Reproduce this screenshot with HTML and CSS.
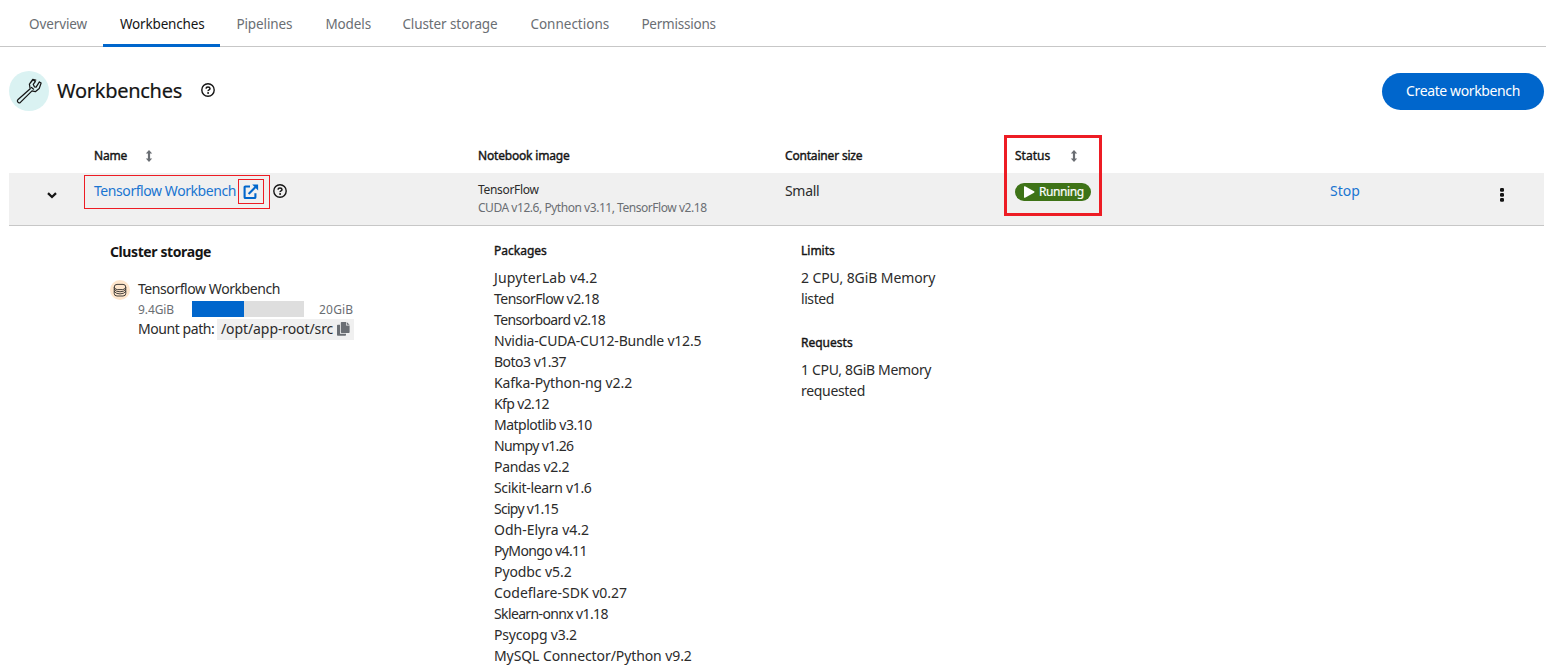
FILE: index.html
```
<!DOCTYPE html>
<html lang="en">
<head>
<meta charset="utf-8">
<title>Workbenches</title>
<link rel="stylesheet" href="styles.css">
</head>
<body>
<nav class="tabs">
  <a class="tab tab-overview">Overview</a>
  <a class="tab tab-workbenches active">Workbenches</a>
  <a class="tab tab-pipelines">Pipelines</a>
  <a class="tab tab-models">Models</a>
  <a class="tab tab-storage">Cluster storage</a>
  <a class="tab tab-connections">Connections</a>
  <a class="tab tab-permissions">Permissions</a>
</nav>
<header class="page-head">
  <span class="head-icon">
    <svg width="28" height="28" viewBox="0 0 28 28" fill="none" stroke="#151515" stroke-width="1.25" stroke-linejoin="round" stroke-linecap="round"><path d="M15.2 11.8 2.8 22.8Q1.8 24 2.9 25.2T5.4 25.4L17 13.9M15.2 11.8 14.4 7.2 18.1 2.7 20.3 4.5 18.2 7.3 19.5 10 21.1 10.2 24.4 4.9 26.1 6 24.2 11.6 20.3 14.7 17 13.9M15.1 6.2 17.8 2.4 20.8 3M16.5 10.5 18.6 12.2"/></svg>
  </span>
  <h1>Workbenches</h1>
  <svg class="help" width="14" height="14" viewBox="0 0 14 14"><circle cx="7" cy="7" r="6.2" fill="none" stroke="#151515" stroke-width="1.4"/><path d="M5 5.6Q5.1 3.9 7 3.9T9 5.5Q9 6.4 8 6.9T7.1 8.2" fill="none" stroke="#151515" stroke-width="1.5"/><circle cx="7.1" cy="10" r=".95" fill="#151515"/></svg>
  <button class="create">Create workbench</button>
</header>
<main class="table">
  <div class="row head">
    <div></div>
    <div class="cell sortable"><span>Name</span><svg width="8" height="12" viewBox="0 0 8 12"><path d="M4 0 7.2 3.4H5.1V8.6H7.2L4 12 .8 8.6H2.9V3.4H.8Z" fill="#6a6e73"/></svg></div>
    <div class="cell">Notebook image</div>
    <div class="cell">Container size</div>
    <div class="cell sortable status-head"><span>Status</span><svg width="8" height="12" viewBox="0 0 8 12"><path d="M4 0 7.2 3.4H5.1V8.6H7.2L4 12 .8 8.6H2.9V3.4H.8Z" fill="#6a6e73"/></svg><i class="status-frame"></i></div>
  </div>
  <div class="row item">
    <div class="toggle"><svg width="10" height="7" viewBox="0 0 10 7"><path d="M1 1.2 5 5 9 1.2" fill="none" stroke="#151515" stroke-width="2.3"/></svg></div>
    <div class="name-cell">
      <div class="link-frame"><span class="track-4">Tensorflow Workbench</span><b class="icon-frame"><svg width="16" height="16" viewBox="0 0 16 16"><path d="M7 2.5H2.4Q1.6 2.5 1.6 3.3V13.2Q1.6 14 2.4 14H11.6Q12.4 14 12.4 13.2V9.2M5.6 10 12.5 3.1" fill="none" stroke="#06c" stroke-width="2.1"/><path d="M9.2.5H15.1V6.4Z" fill="#06c"/></svg></b></div>
      <svg class="help" width="14" height="14" viewBox="0 0 14 14"><circle cx="7" cy="7" r="6.2" fill="none" stroke="#151515" stroke-width="1.4"/><path d="M5 5.6Q5.1 3.9 7 3.9T9 5.5Q9 6.4 8 6.9T7.1 8.2" fill="none" stroke="#151515" stroke-width="1.5"/><circle cx="7.1" cy="10" r=".95" fill="#151515"/></svg>
    </div>
    <div class="cell image"><p class="track-3">TensorFlow</p><p class="image-meta">CUDA v12.6, Python v3.11, TensorFlow v2.18</p></div>
    <div class="cell size track-3">Small</div>
    <div class="cell"><div class="running"><svg width="12" height="12" viewBox="0 0 12 12"><path d="M1 .8Q1-.2 2 .3L11 5.3Q12 6 11 6.7L2 11.7Q1 12.2 1 11.2Z" fill="#fff"/></svg><span>Running</span></div></div>
    <div class="cell stop">Stop</div>
    <div class="kebab"><svg width="4" height="14" viewBox="0 0 4 14" fill="#151515"><rect x="0" y="0" width="4" height="3.8" rx="1.2"/><rect x="0" y="5" width="4" height="3.8" rx="1.2"/><rect x="0" y="10" width="4" height="3.8" rx="1.2"/></svg></div>
  </div>
  <div class="row details">
    <div></div>
    <section class="storage">
      <h2>Cluster storage</h2>
      <div class="volume">
        <span class="volume-icon"><svg width="14" height="14" viewBox="0 0 14 14" fill="none" stroke="#151515" stroke-width=".8"><path d="M1.2 4.2Q1.2 1.4 4 1.4H10Q12.8 1.4 12.8 4.2V10.4Q12.8 13 10 13H4Q1.2 13 1.2 10.4ZM1.2 4.2Q2 6.6 4.4 6.6H9.6Q12 6.6 12.8 4.2M1.2 6.4Q3 8.8 7 8.8T12.8 6.4M1.2 8.4Q3 10.9 7 10.9T12.8 8.4"/></svg></span>
        <div class="volume-info">
          <div class="volume-name track-4">Tensorflow Workbench</div>
          <div class="usage"><span class="used">9.4GiB</span><i class="bar"><i class="bar-fill"></i></i><span class="total">20GiB</span></div>
          <div class="mount"><span class="track-4">Mount path:</span><code><span class="track-1">/opt/app-root/src</span><svg width="13" height="14" viewBox="0 0 13 14" fill="#6a6e73"><path d="M4.6 0H9V3.4H12.6V10.2Q12.6 11 11.8 11H4.6Q3.8 11 3.8 10.2V.8Q3.8 0 4.6 0ZM9.7 0 12.6 2.7H9.7ZM.8 2.7H3V11.8H9V13Q9 13.8 8.2 13.8H.8Q0 13.8 0 13V3.5Q0 2.7.8 2.7Z"/></svg></code></div>
        </div>
      </div>
    </section>
    <section class="packages">
      <h3>Packages</h3>
      <ul>
        <li class="track-wide">JupyterLab v4.2</li>
        <li class="track-5">TensorFlow v2.18</li>
        <li class="track-6">Tensorboard v2.18</li>
        <li class="track-2">Nvidia-CUDA-CU12-Bundle v12.5</li>
        <li class="track-5">Boto3 v1.37</li>
        <li class="track-1">Kafka-Python-ng v2.2</li>
        <li class="track-6">Kfp v2.12</li>
        <li class="track-5">Matplotlib v3.10</li>
        <li class="track-6">Numpy v1.26</li>
        <li class="track-3">Pandas v2.2</li>
        <li class="track-3">Scikit-learn v1.6</li>
        <li class="track-7">Scipy v1.15</li>
        <li>Odh-Elyra v4.2</li>
        <li class="track-6">PyMongo v4.11</li>
        <li class="track-1">Pyodbc v5.2</li>
        <li>Codeflare-SDK v0.27</li>
        <li class="track-6">Sklearn-onnx v1.18</li>
        <li class="track-2">Psycopg v3.2</li>
        <li class="track-1">MySQL Connector/Python v9.2</li>
      </ul>
    </section>
    <section class="resources">
      <h3>Limits</h3>
      <p class="track-1">2 CPU, 8GiB Memory<br><span class="track-4">listed</span></p>
      <h3 class="requests">Requests</h3>
      <p class="track-3">1 CPU, 8GiB Memory<br>requested</p>
    </section>
  </div>
</main>
</body>
</html>
```
FILE: styles.css
```
* { box-sizing: border-box; margin: 0; padding: 0; }
body {
  height: 667px;
  overflow: hidden;
  background: #fff;
  color: #2b2b2b;
  font: 14px/21px "Noto Sans", "Open Sans", sans-serif;
}
svg { display: block; flex: none; }
.track-wide { letter-spacing: .16px; }
.track-1 { letter-spacing: -.09px; }
.track-2 { letter-spacing: -.2px; }
.track-3 { letter-spacing: -.32px; }
.track-4 { letter-spacing: -.43px; }
.track-5 { letter-spacing: -.5px; }
.track-6 { letter-spacing: -.63px; }
.track-7 { letter-spacing: -.72px; }
.tabs { display: flex; height: 47px; padding-left: 12px; border-bottom: 1px solid #c7c7c7; }
.tab { height: 47px; padding: 14px 0 0 16.4px; color: #6a6e73; font-size: 13.5px; letter-spacing: -.1px; white-space: nowrap; }
.tab-overview { width: 91px; padding-left: 17px; }
.tab-workbenches { width: 117px; padding-left: 17px; letter-spacing: -.18px; }
.tab-pipelines { width: 89px; }
.tab-models { width: 77px; }
.tab-storage { width: 128px; }
.tab-connections { width: 111px; letter-spacing: 0; }
.tab-permissions { letter-spacing: -.22px; }
.tab.active { color: #151515; border-bottom: 3px solid #06c; }
.page-head { display: flex; align-items: center; height: 88px; padding: 0 2px 0 9px; }
.head-icon { display: grid; place-items: center; width: 40px; height: 40px; border-radius: 50%; background: #daf2f2; }
h1 { width: 152px; padding-left: 8px; color: #151515; font-size: 20px; font-weight: 400; line-height: 26px; letter-spacing: -.27px; -webkit-text-stroke: .2px; }
.page-head .help { margin-top: -2px; }
.create { width: 162px; height: 37px; margin-left: auto; padding-bottom: 1px; border: 0; border-radius: 19px; background: #06c; color: #fff; font: inherit; letter-spacing: -.38px; }
.table { margin: 0 2px 0 9px; }
.row { display: grid; grid-template-columns: 69px 384px 307px 230px 315px 170px 60px; }
.cell { padding-left: 16px; }
.head { height: 38px; padding-top: 12px; color: #151515; font-size: 12px; line-height: 18px; letter-spacing: -.18px; -webkit-text-stroke: .4px; }
.sortable { display: flex; position: relative; }
.sortable span { width: 51px; }
.sortable svg { margin-top: 3px; }
.status-head span { width: 55px; letter-spacing: 0; }
.status-frame { position: absolute; left: 5px; top: -12px; width: 98px; height: 81px; border: 3px solid #ed1c24; z-index: 2; }
.item { height: 53px; background: #f0f0f0; border-bottom: 1px solid #c7c7c7; }
.toggle { padding: 19px 0 0 38px; }
.name-cell { display: flex; padding: 2px 0 0 6px; }
.link-frame { display: flex; justify-content: space-between; width: 186px; height: 34px; padding: 3px 5px 0 9px; border: 1px solid #ed1c24; color: #1a75d1; }
.link-frame > span { padding-top: 1px; white-space: nowrap; }
.icon-frame { width: 26px; height: 25px; padding: 4px; border: 1px solid #ed1c24; }
.name-cell .help { margin: 9px 0 0 3px; }
.image { padding-top: 8px; font-size: 12px; line-height: 18px; }
.image-meta { color: #6a6e73; letter-spacing: -.46px; }
.size, .stop { padding-top: 7px; }
.running { display: flex; align-items: center; width: 76px; height: 18px; margin-top: 10px; padding-left: 8px; gap: 4px; border-radius: 9px; background: #3e7317; color: #fff; font-size: 12px; line-height: 18px; letter-spacing: -.4px; -webkit-text-stroke: .2px; }
.stop { color: #1a75d1; }
.kebab { padding: 15px 0 0 16px; }
.storage { padding: 16px 0 0 32px; }
h2 { margin-top: -1px; padding-bottom: 1px; color: #151515; font-size: 14px; line-height: 21px; font-weight: 700; letter-spacing: -.4px; }
.volume { display: flex; padding-top: 16px; gap: 8px; }
.volume-icon { display: grid; place-items: center; width: 20px; height: 20px; margin-top: 1px; border-radius: 50%; background: #ffe6cc; }
.volume-info { width: 216px; }
.volume-name { height: 22px; line-height: 20px; }
.usage { display: flex; height: 18px; font-size: 12px; line-height: 18px; color: #6a6e73; }
.used { width: 54px; letter-spacing: -.1px; }
.bar { width: 112px; height: 16px; margin-right: 15px; background: #dedede; }
.bar-fill { display: block; width: 52px; height: 16px; background: #06c; }
.total { letter-spacing: .2px; }
.mount { display: flex; justify-content: space-between; height: 21px; line-height: 19px; white-space: nowrap; }
.mount code { display: flex; justify-content: space-between; width: 137px; height: 21px; padding: 0 4px; background: #f0f0f0; font: inherit; line-height: 19px; }
.mount svg { margin-top: 3px; }
.packages, .resources { padding: 16px 0 0 32px; }
h3 { margin-bottom: 7px; color: #151515; font-size: 12px; font-weight: 400; line-height: 18px; -webkit-text-stroke: .4px; }
.requests { margin-top: 25px; }
ul { list-style: none; }
```
